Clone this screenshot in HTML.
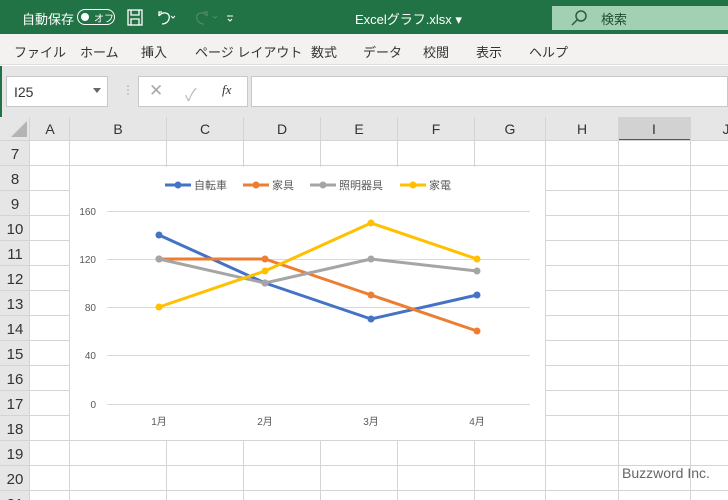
<!DOCTYPE html>
<html><head><meta charset="utf-8"><style>
*{margin:0;padding:0;box-sizing:border-box}
body{width:728px;height:500px;overflow:hidden;position:relative;background:#fff;font-family:"Liberation Sans","Noto Sans CJK JP",sans-serif}
.a{position:absolute}
</style></head><body>
<div class="a" style="left:0;top:0;width:728px;height:34px;background:#217346"></div>
<div class="a" style="left:22px;top:9px;color:#fff;font-size:13px">自動保存</div>
<div class="a" style="left:77px;top:9px;width:38px;height:16px;border:1.5px solid #fff;border-radius:8px"></div>
<div class="a" style="left:81px;top:13px;width:8px;height:8px;background:#fff;border-radius:50%"></div>
<div class="a" style="left:94px;top:10px;color:#fff;font-size:10px">オフ</div>
<svg class="a" style="left:126px;top:8px" width="110" height="20" viewBox="0 0 110 20" fill="none" stroke="#fff" stroke-width="1.3">
<rect x="2" y="2" width="14" height="15"/><path d="M5 2v5h8V2M5 17v-6h8v6"/>
<path d="M36 4h-3v4M33 8c3-5 12-4 10 3-1 4-5 5-7 5" /><path d="M45 8l2 2 2-2" stroke-width="1"/>
<path d="M78 4h3v4M81 8c-3-5-12-4-10 3 1 4 5 5 7 5" stroke="#4f8a63"/><path d="M87 8l2 2 2-2" stroke="#4f8a63" stroke-width="1"/>
<path d="M101 8h6M102 11l2 2 2-2" stroke-width="1"/>
</svg>
<div class="a" style="left:355px;top:9px;color:#fff;font-size:13px">Excelグラフ.xlsx ▾</div>
<div class="a" style="left:552px;top:6px;width:176px;height:24px;background:#a2d0b2"></div>
<svg class="a" style="left:570px;top:9px" width="18" height="18" fill="none" stroke="#2c5e3d" stroke-width="1.5"><circle cx="11" cy="7" r="5"/><path d="M7 11l-5 5"/></svg>
<div class="a" style="left:601px;top:9px;color:#1f4d30;font-size:13px">検索</div>
<div class="a" style="left:0;top:34px;width:728px;height:31px;background:#f3f2f1;border-bottom:1px solid #e1dfdd"></div>
<div class="a" style="top:42px;font-size:13px;color:#333;left:14px">ファイル</div>
<div class="a" style="top:42px;font-size:13px;color:#333;left:80px">ホーム</div>
<div class="a" style="top:42px;font-size:13px;color:#333;left:141px">挿入</div>
<div class="a" style="top:42px;font-size:13px;color:#333;left:195px">ページ レイアウト</div>
<div class="a" style="top:42px;font-size:13px;color:#333;left:311px">数式</div>
<div class="a" style="top:42px;font-size:13px;color:#333;left:363px">データ</div>
<div class="a" style="top:42px;font-size:13px;color:#333;left:423px">校閲</div>
<div class="a" style="top:42px;font-size:13px;color:#333;left:476px">表示</div>
<div class="a" style="top:42px;font-size:13px;color:#333;left:529px">ヘルプ</div>
<div class="a" style="left:0;top:66px;width:728px;height:51px;background:#e6e6e6"></div>
<div class="a" style="left:0;top:66px;width:2px;height:434px;background:#217346"></div>
<div class="a" style="left:6px;top:76px;width:102px;height:31px;background:#fff;border:1px solid #c8c8c8"></div>
<div class="a" style="left:14px;top:84px;font-size:14px;color:#333">I25</div>
<div class="a" style="left:93px;top:88px;border:4px solid transparent;border-top:5px solid #666"></div>
<div class="a" style="left:122px;top:83px;color:#aaa;font-size:12px">⋮</div>
<div class="a" style="left:138px;top:76px;width:110px;height:31px;background:#fff;border:1px solid #c8c8c8"></div>
<div class="a" style="left:149px;top:81px;color:#aaa;font-size:17px">✕</div>
<div class="a" style="left:185px;top:81px;color:#bbb;font-size:17px">✓</div>
<div class="a" style="left:222px;top:82px;color:#333;font-size:13px;font-style:italic;font-family:'Liberation Serif',serif">fx</div>
<div class="a" style="left:251px;top:76px;width:477px;height:31px;background:#fff;border:1px solid #c8c8c8"></div>
<svg class="a" style="left:0;top:117px" width="728" height="383" font-family="Liberation Sans,Noto Sans CJK JP,sans-serif">
<rect x="0" y="0" width="728" height="24" fill="#e6e6e6"/>
<rect x="0" y="0" width="30" height="383" fill="#e6e6e6"/>
<rect x="618" y="0" width="72" height="24" fill="#d2d2d2"/>
<rect x="618" y="22" width="72" height="2" fill="#217346"/>
<path d="M27 4L27 20L11 20Z" fill="#b4b4b4"/>
<g stroke="#d4d4d4" stroke-width="1">
<path d="M0 23.5H728M29.5 0V383"/>
<path d="M69.5 0V383M166.5 0V383M243.5 0V383M320.5 0V383M397.5 0V383M474.5 0V383M545.5 0V383M618.5 0V383M690.5 0V383"/>
<path d="M0 48.5H728M0 73.5H728M0 98.5H728M0 123.5H728M0 148.5H728M0 173.5H728M0 198.5H728M0 223.5H728M0 248.5H728M0 273.5H728M0 298.5H728M0 323.5H728M0 348.5H728M0 373.5H728"/>
</g>
<g font-size="14" fill="#333" text-anchor="middle">
<text x="50" y="17">A</text><text x="118" y="17">B</text><text x="205" y="17">C</text><text x="282" y="17">D</text><text x="359" y="17">E</text><text x="436" y="17">F</text><text x="510" y="17">G</text><text x="582" y="17">H</text><text x="654" y="17">I</text><text x="726" y="17">J</text>
</g>
<g font-size="15" fill="#333" text-anchor="middle">
<text x="15" y="42">7</text><text x="15" y="67">8</text><text x="15" y="92">9</text><text x="15" y="117">10</text><text x="15" y="142">11</text><text x="15" y="167">12</text><text x="15" y="192">13</text><text x="15" y="217">14</text><text x="15" y="242">15</text><text x="15" y="267">16</text><text x="15" y="292">17</text><text x="15" y="317">18</text><text x="15" y="342">19</text><text x="15" y="367">20</text><text x="15" y="392">21</text>
</g>
</svg>
<svg class="a" style="left:0;top:0" width="728" height="500" font-family="Liberation Sans,Noto Sans CJK JP,sans-serif">
<rect x="70" y="167" width="475" height="273" fill="#fff"/>
<g stroke="#d9d9d9"><path d="M107 211.5H530M107 259.5H530M107 307.5H530M107 355.5H530M107 404.5H530"/></g>
<g font-size="10" fill="#595959" text-anchor="end"><text x="96" y="215">160</text><text x="96" y="263">120</text><text x="96" y="311">80</text><text x="96" y="359">40</text><text x="96" y="408">0</text></g>
<g font-size="10" fill="#595959" text-anchor="middle"><text x="159" y="425">1月</text><text x="265" y="425">2月</text><text x="371" y="425">3月</text><text x="477" y="425">4月</text></g>
<g fill="none" stroke-width="3" stroke-linejoin="round">
<polyline points="159,235 265,283 371,319 477,295" stroke="#4472c4"/>
<polyline points="159,259 265,259 371,295 477,331" stroke="#ed7d31"/>
<polyline points="159,259 265,283 371,259 477,271" stroke="#a5a5a5"/>
<polyline points="159,307 265,271 371,223 477,259" stroke="#ffc000"/>
</g>
<g fill="#4472c4"><circle cx="159" cy="235" r="3.5"/><circle cx="265" cy="283" r="3.5"/><circle cx="371" cy="319" r="3.5"/><circle cx="477" cy="295" r="3.5"/></g>
<g fill="#ed7d31"><circle cx="159" cy="259" r="3.5"/><circle cx="265" cy="259" r="3.5"/><circle cx="371" cy="295" r="3.5"/><circle cx="477" cy="331" r="3.5"/></g>
<g fill="#a5a5a5"><circle cx="159" cy="259" r="3.5"/><circle cx="265" cy="283" r="3.5"/><circle cx="371" cy="259" r="3.5"/><circle cx="477" cy="271" r="3.5"/></g>
<g fill="#ffc000"><circle cx="159" cy="307" r="3.5"/><circle cx="265" cy="271" r="3.5"/><circle cx="371" cy="223" r="3.5"/><circle cx="477" cy="259" r="3.5"/></g>
<g stroke-width="3"><path d="M165 185H191" stroke="#4472c4"/><path d="M243 185H269" stroke="#ed7d31"/><path d="M310 185H336" stroke="#a5a5a5"/><path d="M400 185H426" stroke="#ffc000"/></g>
<circle cx="178" cy="185" r="3.5" fill="#4472c4"/><circle cx="256" cy="185" r="3.5" fill="#ed7d31"/><circle cx="323" cy="185" r="3.5" fill="#a5a5a5"/><circle cx="413" cy="185" r="3.5" fill="#ffc000"/>
<g font-size="11" fill="#595959"><text x="194" y="189">自転車</text><text x="272" y="189">家具</text><text x="339" y="189">照明器具</text><text x="429" y="189">家電</text></g>
<text x="622" y="478" font-size="14" fill="#666">Buzzword Inc.</text>
</svg>
</body></html>
